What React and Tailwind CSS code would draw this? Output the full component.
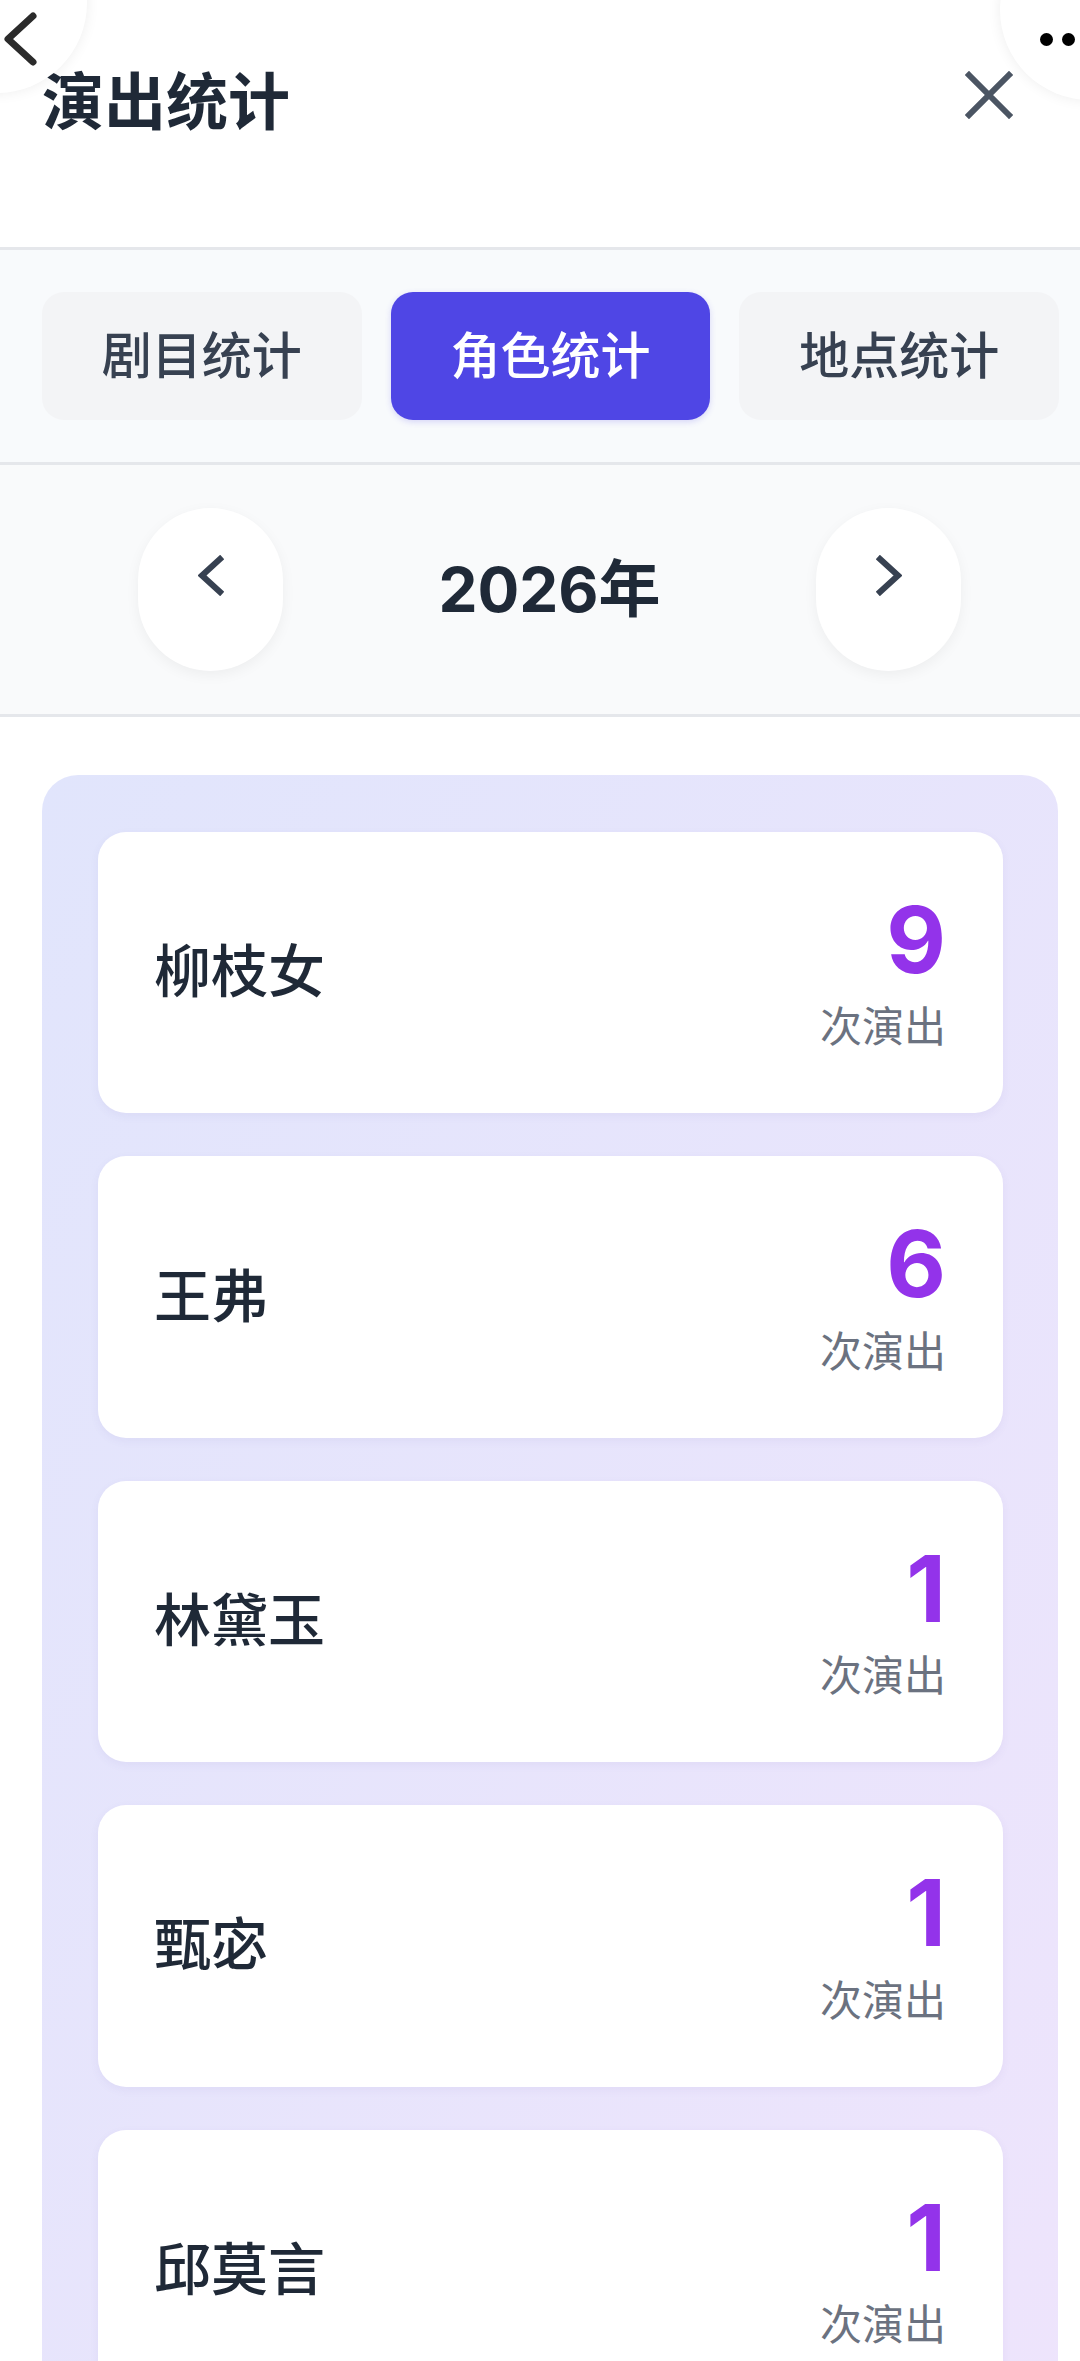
const FONT = { fontFamily: 'Inter, "Noto Sans CJK SC", sans-serif' }

const roles = [
  { name: '柳枝女', count: 9 },
  { name: '王弗', count: 6 },
  { name: '林黛玉', count: 1 },
  { name: '甄宓', count: 1 },
  { name: '邱莫言', count: 1 },
]

const tabs = ['剧目统计', '角色统计', '地点统计']

function Chevron({ dir }) {
  const d = dir === 'left' ? 'M22 4 L4 20.5 L22 37' : 'M4 4 L22 20.5 L4 37'
  return (
    <svg width="26" height="41" viewBox="0 0 26 41" className="mb-[28px]">
      <path d={d} fill="none" stroke="#374151" strokeWidth="6" strokeLinecap="square" strokeLinejoin="miter" />
    </svg>
  )
}

function RoleCard({ name, count }) {
  return (
    <div className="flex items-center justify-between rounded-[28px] bg-white pl-[56px] pr-[57px] pt-[53px] pb-[55px] shadow-[0_3px_10px_rgba(80,70,160,0.06)]">
      <span className="text-[57px] leading-none font-medium text-[#1f2937]">{name}</span>
      <div className="flex flex-col items-end">
        <span className="text-[92px] leading-[1.2] font-bold text-[#9333ea]">{count}</span>
        <span className="text-[42px] leading-[1.5] text-[#6b7280]">次演出</span>
      </div>
    </div>
  )
}

export default function App() {
  return (
    <div className="relative w-[1080px] h-[2361px] overflow-hidden bg-white" style={FONT}>
      {/* header */}
      <div className="flex items-start justify-between h-[250px] border-b-[3px] border-[#e5e7eb] bg-white pl-[42px] pr-[67px] pt-[72px]">
        <h1 className="text-[62px] leading-none font-bold text-[#1f2937]">演出统计</h1>
        <svg width="48" height="48" viewBox="0 0 48 48" className="mt-[-1px]">
          <path d="M4 4 L44 44 M44 4 L4 44" stroke="#4b5563" strokeWidth="6" strokeLinecap="square" />
        </svg>
      </div>

      {/* tabs */}
      <div className="grid grid-cols-3 gap-[29px] border-b-[3px] border-[#e5e7eb] bg-[#f8fafc] pl-[42px] pr-[21px] py-[42px]">
        {tabs.map((t, i) => (
          <div
            key={t}
            className={
              i === 1
                ? 'flex h-[128px] items-center justify-center rounded-[22px] bg-[#4f46e5] text-[50px] font-medium text-white shadow-[0_2px_6px_rgba(79,70,229,0.2)]'
                : 'flex h-[128px] items-center justify-center rounded-[22px] bg-[#f3f4f6] text-[50px] font-medium text-[#374151]'
            }
          >
            {t}
          </div>
        ))}
      </div>

      {/* year */}
      <div className="flex h-[252px] items-center justify-between border-b-[3px] border-[#e5e7eb] bg-[#f9fafb] pl-[138px] pr-[119px]">
        <button className="flex h-[163px] w-[145px] items-center justify-center rounded-full bg-white shadow-[0_4px_14px_rgba(0,0,0,0.05)]">
          <Chevron dir="left" />
        </button>
        <span className="text-[62px] leading-none font-bold text-[#1f2937]">2026年</span>
        <button className="flex h-[163px] w-[145px] items-center justify-center rounded-full bg-white shadow-[0_4px_14px_rgba(0,0,0,0.05)]">
          <Chevron dir="right" />
        </button>
      </div>

      {/* list */}
      <div className="ml-[42px] mr-[22px] mt-[58px] flex flex-col gap-[43px] rounded-[36px] bg-gradient-to-br from-[#e1e5fc] to-[#eee4fc] pl-[56px] pr-[55px] pt-[57px] pb-[56px]">
        {roles.map((r) => (
          <RoleCard key={r.name} name={r.name} count={r.count} />
        ))}
      </div>

      {/* mini-program overlay buttons */}
      <div className="absolute left-[-93px] top-[-87px] flex h-[180px] w-[180px] items-end justify-end rounded-full bg-white shadow-[0_0_14px_rgba(0,0,0,0.07)]">
        <svg width="40" height="56" viewBox="0 0 40 56" className="absolute left-[95px] top-[98px]">
          <path d="M31 5 L6 28 L31 51" fill="none" stroke="#2b2b2b" strokeWidth="7" strokeLinecap="round" strokeLinejoin="round" />
        </svg>
      </div>
      <div className="absolute left-[1000px] top-[-80px] h-[180px] w-[180px] rounded-full bg-white shadow-[0_0_14px_rgba(0,0,0,0.07)]">
        <span className="absolute left-[40px] top-[113px] h-[13px] w-[13px] rounded-full bg-black" />
        <span className="absolute left-[62px] top-[113px] h-[13px] w-[13px] rounded-full bg-black" />
      </div>
    </div>
  )
}
